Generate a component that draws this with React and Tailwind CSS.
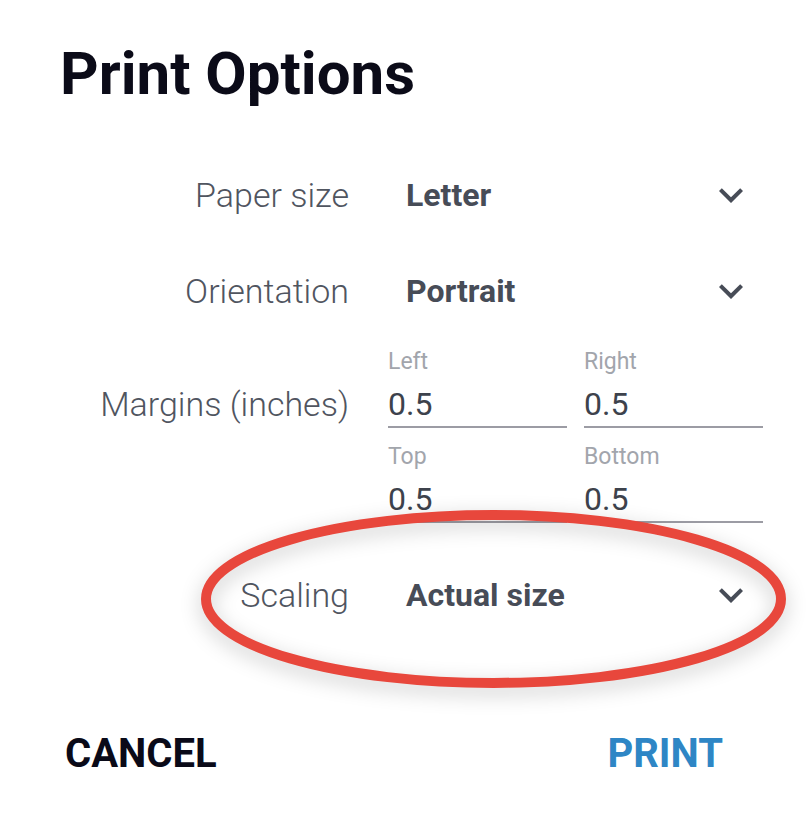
import React from 'react';

const Chevron = () => (
    <svg width="48" height="48" viewBox="0 0 24 24" className="shrink-0">
        <path d="M16.59 8.59L12 13.17 7.41 8.59 6 10l6 6 6-6z" fill="#474c57" />
    </svg>
);

const SelectRow = ({ label, value }) => (
    <>
        <div className="h-[96px] flex items-center justify-end text-[34px] font-light text-[#50555f] whitespace-nowrap">
            {label}
        </div>
        <div className="h-[96px] flex items-center justify-between pl-[18px] pr-[8px]">
            <span className="text-[32px] font-bold text-[#474c57]">{value}</span>
            <Chevron />
        </div>
    </>
);

const MarginField = ({ label, value }) => (
    <div className="flex flex-col">
        <span className="text-[23px] leading-[24px] text-[#a2a5ac]">{label}</span>
        <span className="mt-[8px] text-[32px] leading-[44px] text-[#3d424c] border-b-2 border-[#9c9ca4]">
            {value}
        </span>
    </div>
);

const App = () => {
    return (
        <div className="relative w-full min-h-screen bg-white font-['Roboto',sans-serif] overflow-hidden">
            <div className="pt-[44px] pl-[60px] pr-[49px]">
                <h1 className="text-[60px] leading-none font-bold text-[#0b0b18]">Print Options</h1>

                <div className="mt-[43px] grid grid-cols-[289px_1fr] gap-x-[39px]">
                    <SelectRow label="Paper size" value="Letter" />
                    <SelectRow label="Orientation" value="Portrait" />

                    <div className="pt-[43px] text-right text-[34px] leading-[44px] font-light text-[#50555f] whitespace-nowrap">
                        Margins (inches)
                    </div>
                    <div className="pt-[11px] pb-[24px] grid grid-cols-2 gap-x-[17px] gap-y-[17px]">
                        <MarginField label="Left" value="0.5" />
                        <MarginField label="Right" value="0.5" />
                        <MarginField label="Top" value="0.5" />
                        <MarginField label="Bottom" value="0.5" />
                    </div>

                    <SelectRow label="Scaling" value="Actual size" />
                </div>
            </div>

            <div className="mt-[87px] flex justify-between pl-[65px] pr-[89px]">
                <button className="text-[40px] leading-[48px] font-bold text-[#0a0a18]">CANCEL</button>
                <button className="text-[40px] leading-[48px] font-bold text-[#2e86c5]">PRINT</button>
            </div>

            {/* annotation circled around the scaling row */}
            <svg
                className="absolute left-0 top-0 pointer-events-none drop-shadow-[0_6px_10px_rgba(0,0,0,0.22)]"
                width="812"
                height="822"
            >
                <ellipse cx="493.5" cy="599" rx="287.5" ry="84" fill="none" stroke="#e8473c" strokeWidth="10" />
            </svg>
        </div>
    );
};

export default App;
